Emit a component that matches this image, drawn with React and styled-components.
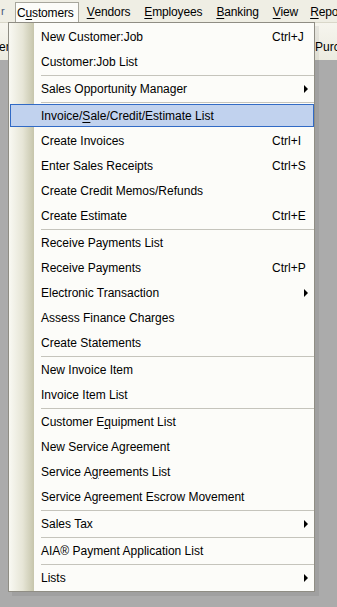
import React from 'react';
import styled, { createGlobalStyle } from 'styled-components';

const GlobalStyle = createGlobalStyle`
  html, body {
    margin: 0;
    padding: 0;
    background: #ababab;
  }
  body {
    font-family: Tahoma, "Liberation Sans", Arial, sans-serif;
    font-size: 12px;
    color: #000;
  }
`;

const Screen = styled.div`
  position: relative;
  width: 337px;
  height: 607px;
  overflow: hidden;
  background: #ababab;
`;

const MenuBar = styled.div`
  display: flex;
  align-items: center;
  height: 22px;
  background: #efeee4;
  font-family: "Liberation Sans", Arial, sans-serif;
  font-size: 12px;
  letter-spacing: -0.15px;
  white-space: nowrap;
  overflow: hidden;
`;

const Stub = styled.span`
  width: 15px;
  flex-shrink: 0;
  padding-left: 1px;
  box-sizing: border-box;
  color: #4a5a7a;
  font-size: 11px;
`;

const BarItem = styled.div`
  flex-shrink: 0;
  height: ${(p) => (p.$open ? '21px' : '20px')};
  margin-top: ${(p) => (p.$open ? '2px' : '0')};
  display: flex;
  align-items: center;
  padding: 0 ${(p) => (p.$open ? '4px' : '0')} 0 1px;
  margin-right: ${(p) => p.$gap || 0}px;
  background: ${(p) => (p.$open ? '#fcfcf9' : 'transparent')};
  border: 1px solid ${(p) => (p.$open ? '#a7a69c' : 'transparent')};
  border-bottom: none;
  box-sizing: border-box;
  position: relative;
  z-index: 3;
`;

const Key = styled.span`
  text-decoration: underline;
  text-underline-offset: 2px;
`;

const Toolbar = styled.div`
  display: flex;
  justify-content: space-between;
  align-items: center;
  height: 38px;
  background: linear-gradient(#f6f5ee, #ecebe0);
  border-top: 1px solid #d9d7c9;
  font-family: "Liberation Sans", Arial, sans-serif;
  font-size: 12px;
  box-sizing: border-box;
  padding-top: 10px;
`;

const ToolEdge = styled.span`
  padding-left: ${(p) => (p.$right ? '5px' : '0')};
  width: ${(p) => (p.$right ? '22px' : 'auto')};
  border-left: ${(p) => (p.$right ? '1px solid #dcdacb' : 'none')};
  height: 28px;
  display: flex;
  align-items: center;
  overflow: hidden;
  white-space: nowrap;
  margin-left: ${(p) => (p.$right ? '0' : '-1px')};
`;

const Dropdown = styled.div`
  position: absolute;
  left: 8px;
  top: 22px;
  width: 307px;
  box-sizing: border-box;
  background: #fcfcf9;
  border: 1px solid #8f8d84;
  padding: 2px 0 0;
  box-shadow: 4px 4px 0 rgba(0, 0, 0, 0.06);
  z-index: 2;
  font-family: "Liberation Sans", Arial, sans-serif;
  font-size: 12px;

  &::before {
    content: '';
    position: absolute;
    left: 0;
    top: 0;
    bottom: 0;
    width: 25px;
    background: linear-gradient(90deg, #f9f9f3 0%, #e6e5d6 55%, #c6c5ab 100%);
  }
`;

const Row = styled.div`
  position: relative;
  display: flex;
  align-items: center;
  height: 25px;
  padding: 0 0 0 32px;
  box-sizing: border-box;
  white-space: nowrap;

  &::after {
    content: '';
    position: absolute;
    left: 1px;
    right: 0;
    top: 0;
    height: 23px;
    box-sizing: border-box;
    background: ${(p) => (p.$active ? '#c1d2ee' : 'transparent')};
    border: 1px solid ${(p) => (p.$active ? '#316ac5' : 'transparent')};
  }
`;

const Label = styled.span`
  position: relative;
  z-index: 1;
  flex: 1;
  margin-top: -2px;
`;

const Shortcut = styled.span`
  position: relative;
  z-index: 1;
  width: 42px;
  margin-top: -2px;
`;

const Arrow = styled.span`
  position: relative;
  z-index: 1;
  width: 0;
  height: 0;
  margin-right: 6px;
  margin-top: -2px;
  border-top: 4px solid transparent;
  border-bottom: 4px solid transparent;
  border-left: 4px solid #000;
`;

const Separator = styled.div`
  height: 2px;
  margin-left: 32px;
  border-top: 1px solid #c5c4bc;
  box-sizing: border-box;
`;

const menu = [
  [{ label: 'New Customer:Job', key: 'Ctrl+J' }, { label: 'Customer:Job List' }],
  [{ label: 'Sales Opportunity Manager', sub: true }],
  [
    { label: ['Invoice/', 'S', 'ale/Credit/Estimate List'], active: true },
    { label: 'Create Invoices', key: 'Ctrl+I' },
    { label: 'Enter Sales Receipts', key: 'Ctrl+S' },
    { label: 'Create Credit Memos/Refunds' },
    { label: 'Create Estimate', key: 'Ctrl+E' },
  ],
  [
    { label: 'Receive Payments List' },
    { label: 'Receive Payments', key: 'Ctrl+P' },
    { label: 'Electronic Transaction', sub: true },
    { label: 'Assess Finance Charges' },
    { label: 'Create Statements' },
  ],
  [{ label: 'New Invoice Item' }, { label: 'Invoice Item List' }],
  [
    { label: ['Customer E', 'q', 'uipment List'] },
    { label: 'New Service Agreement' },
    { label: ['Service A', 'g', 'reements List'] },
    { label: 'Service Agreement Escrow Movement' },
  ],
  [{ label: 'Sales Tax', sub: true }],
  [{ label: 'AIA® Payment Application List' }],
  [{ label: 'Lists', sub: true }],
];

const renderLabel = (label) =>
  Array.isArray(label) ? (
    <>
      {label[0]}
      <Key>{label[1]}</Key>
      {label[2]}
    </>
  ) : (
    label
  );

const App = () => {
  return (
    <Screen>
      <GlobalStyle />
      <MenuBar>
        <Stub>r</Stub>
        <BarItem $open $gap={6}>
          C<Key>u</Key>stomers
        </BarItem>
        <BarItem $gap={11}>
          <Key>V</Key>endors
        </BarItem>
        <BarItem $gap={11}>
          <Key>E</Key>mployees
        </BarItem>
        <BarItem $gap={11}>
          <Key>B</Key>anking
        </BarItem>
        <BarItem $gap={9}>
          <Key>V</Key>iew
        </BarItem>
        <BarItem>
          <Key>R</Key>epo
        </BarItem>
      </MenuBar>
      <Toolbar>
        <ToolEdge>er</ToolEdge>
        <ToolEdge $right>Purc</ToolEdge>
      </Toolbar>
      <Dropdown>
        {menu.map((group, gi) => (
          <React.Fragment key={gi}>
            {gi > 0 && <Separator />}
            {group.map((item, i) => (
              <Row key={i} $active={item.active}>
                <Label>{renderLabel(item.label)}</Label>
                {item.key && <Shortcut>{item.key}</Shortcut>}
                {item.sub && <Arrow />}
              </Row>
            ))}
          </React.Fragment>
        ))}
      </Dropdown>
    </Screen>
  );
};

export default App;
